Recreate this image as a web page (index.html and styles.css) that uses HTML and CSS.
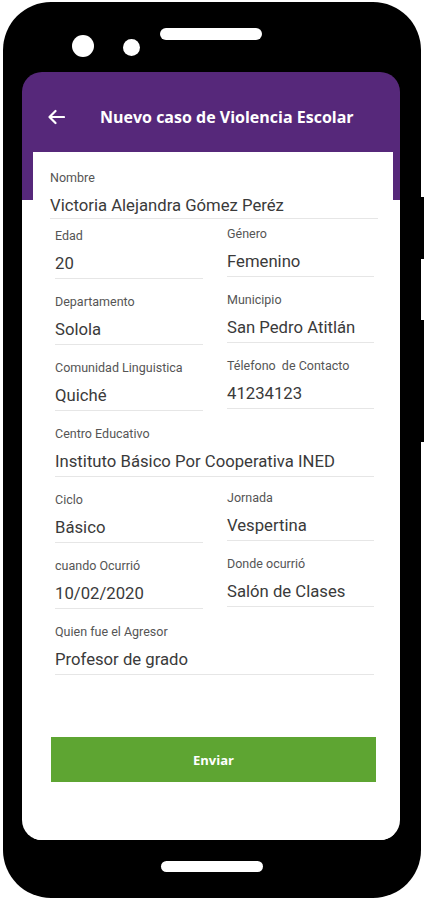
FILE: index.html
```html
<!DOCTYPE html>
<html lang="es">
<head>
    <meta charset="UTF-8">
    <meta name="viewport" content="width=device-width, initial-scale=1.0">
    <title>Nuevo caso de Violencia Escolar</title>
    <link rel="stylesheet" href="styles.css">
</head>
<body>
    <div class="phone">
        <span class="side-key key-a"></span>
        <span class="side-key key-b"></span>

        <div class="bezel-top">
            <span class="cam cam-lg"></span>
            <span class="cam cam-sm"></span>
            <span class="speaker"></span>
        </div>

        <div class="screen">
            <header class="appbar">
                <svg class="back" width="18" height="16" viewBox="0 0 18 16" aria-hidden="true">
                    <path d="M17 8H2.5M8.5 2L2.5 8l6 6" fill="none" stroke="#fff" stroke-width="2.2" stroke-linecap="round" stroke-linejoin="round"/>
                </svg>
                <h1>Nuevo caso de Violencia Escolar</h1>
            </header>

            <form class="card" id="caso-form">
                <div class="field field-wide">
                    <label>Nombre</label>
                    <div class="value">Victoria Alejandra Gómez Peréz</div>
                </div>

                <div class="grid">
                    <div class="field">
                        <label>Edad</label>
                        <div class="value">20</div>
                    </div>
                    <div class="field field-r">
                        <label>Género</label>
                        <div class="value">Femenino</div>
                    </div>
                    <div class="field">
                        <label>Departamento</label>
                        <div class="value">Solola</div>
                    </div>
                    <div class="field field-r">
                        <label>Municipio</label>
                        <div class="value">San Pedro Atitlán</div>
                    </div>
                    <div class="field">
                        <label>Comunidad Linguistica</label>
                        <div class="value">Quiché</div>
                    </div>
                    <div class="field field-r">
                        <label>Télefono&nbsp; de Contacto</label>
                        <div class="value">41234123</div>
                    </div>
                    <div class="field span-2">
                        <label>Centro Educativo</label>
                        <div class="value">Instituto Básico Por Cooperativa INED</div>
                    </div>
                    <div class="field">
                        <label>Ciclo</label>
                        <div class="value">Básico</div>
                    </div>
                    <div class="field field-r">
                        <label>Jornada</label>
                        <div class="value">Vespertina</div>
                    </div>
                    <div class="field">
                        <label>cuando Ocurrió</label>
                        <div class="value">10/02/2020</div>
                    </div>
                    <div class="field field-r">
                        <label>Donde ocurrió</label>
                        <div class="value">Salón de Clases</div>
                    </div>
                    <div class="field span-2">
                        <label>Quien fue el Agresor</label>
                        <div class="value">Profesor de grado</div>
                    </div>
                </div>

                <button type="button" class="send">Enviar</button>
            </form>
        </div>

        <div class="bezel-bottom">
            <span class="home"></span>
        </div>
    </div>
</body>
</html>
```

FILE: styles.css
```css
* {
    box-sizing: border-box;
}

body {
    margin: 0;
    background: #fff;
    font-family: Roboto, "Liberation Sans", sans-serif;
    color: #3a3a3a;
}

.phone {
    position: relative;
    width: 418px;
    height: 896px;
    margin: 2px 0 0 3px;
    padding: 0 21px 0 19px;
    background: #000;
    border-radius: 48px;
    display: flex;
    flex-direction: column;
}

.side-key {
    position: absolute;
    right: -3px;
    width: 4px;
    background: #000;
}

.key-a {
    top: 195px;
    height: 62px;
}

.key-b {
    top: 318px;
    height: 122px;
}

.bezel-top {
    height: 70px;
    display: flex;
    align-items: flex-start;
}

.cam {
    background: #fff;
    border-radius: 50%;
}

.cam-lg {
    width: 22px;
    height: 22px;
    margin: 33px 0 0 50px;
}

.cam-sm {
    width: 17px;
    height: 17px;
    margin: 37px 0 0 29px;
}

.speaker {
    width: 102px;
    height: 12px;
    margin: 26px 0 0 20px;
    background: #fff;
    border-radius: 6px;
}

.screen {
    height: 768px;
    border-radius: 20px;
    overflow: hidden;
    background: linear-gradient(#56287a 0, #56287a 128px, #fff 128px);
}

.appbar {
    height: 80px;
    padding: 10px 0 0 25px;
    display: flex;
    align-items: center;
}

.back {
    flex: none;
}

.appbar h1 {
    margin: 0 0 0 35px;
    font-family: "Open Sans", "Liberation Sans", sans-serif;
    font-size: 16px;
    font-weight: 700;
    color: #fff;
    white-space: nowrap;
}

.card {
    margin: 0 7px 0 11px;
    padding: 18px 19px 0 22px;
    background: #fff;
    min-height: 688px;
}

.field label {
    display: block;
    font-size: 12.5px;
    line-height: 15px;
    color: #555;
}

.field .value {
    margin-top: 10px;
    padding-bottom: 3px;
    font-size: 16.7px;
    line-height: 22px;
    color: #3a3a3a;
    border-bottom: 1px solid #e6e6e6;
    white-space: nowrap;
}

.field-wide {
    margin: 0 -4px 0 -5px;
}

.field-wide .value {
    padding-bottom: 1px;
}

.grid {
    margin-top: 9px;
    display: grid;
    grid-template-columns: 148px 147px;
    column-gap: 24px;
    row-gap: 15px;
}

.field-r {
    margin-top: -2px;
}

.span-2 {
    grid-column: 1 / 3;
}

.send {
    display: block;
    width: 325px;
    height: 45px;
    margin: 62px 0 0 -4px;
    border: none;
    background: #5ea532;
    color: #fff;
    font-family: "Open Sans", "Liberation Sans", sans-serif;
    font-size: 13px;
    font-weight: 700;
    cursor: pointer;
}

.bezel-bottom {
    flex: 1;
    display: flex;
    justify-content: center;
    padding: 21px 0 0 1px;
}

.home {
    width: 102px;
    height: 11px;
    background: #fff;
    border-radius: 6px;
}
```
